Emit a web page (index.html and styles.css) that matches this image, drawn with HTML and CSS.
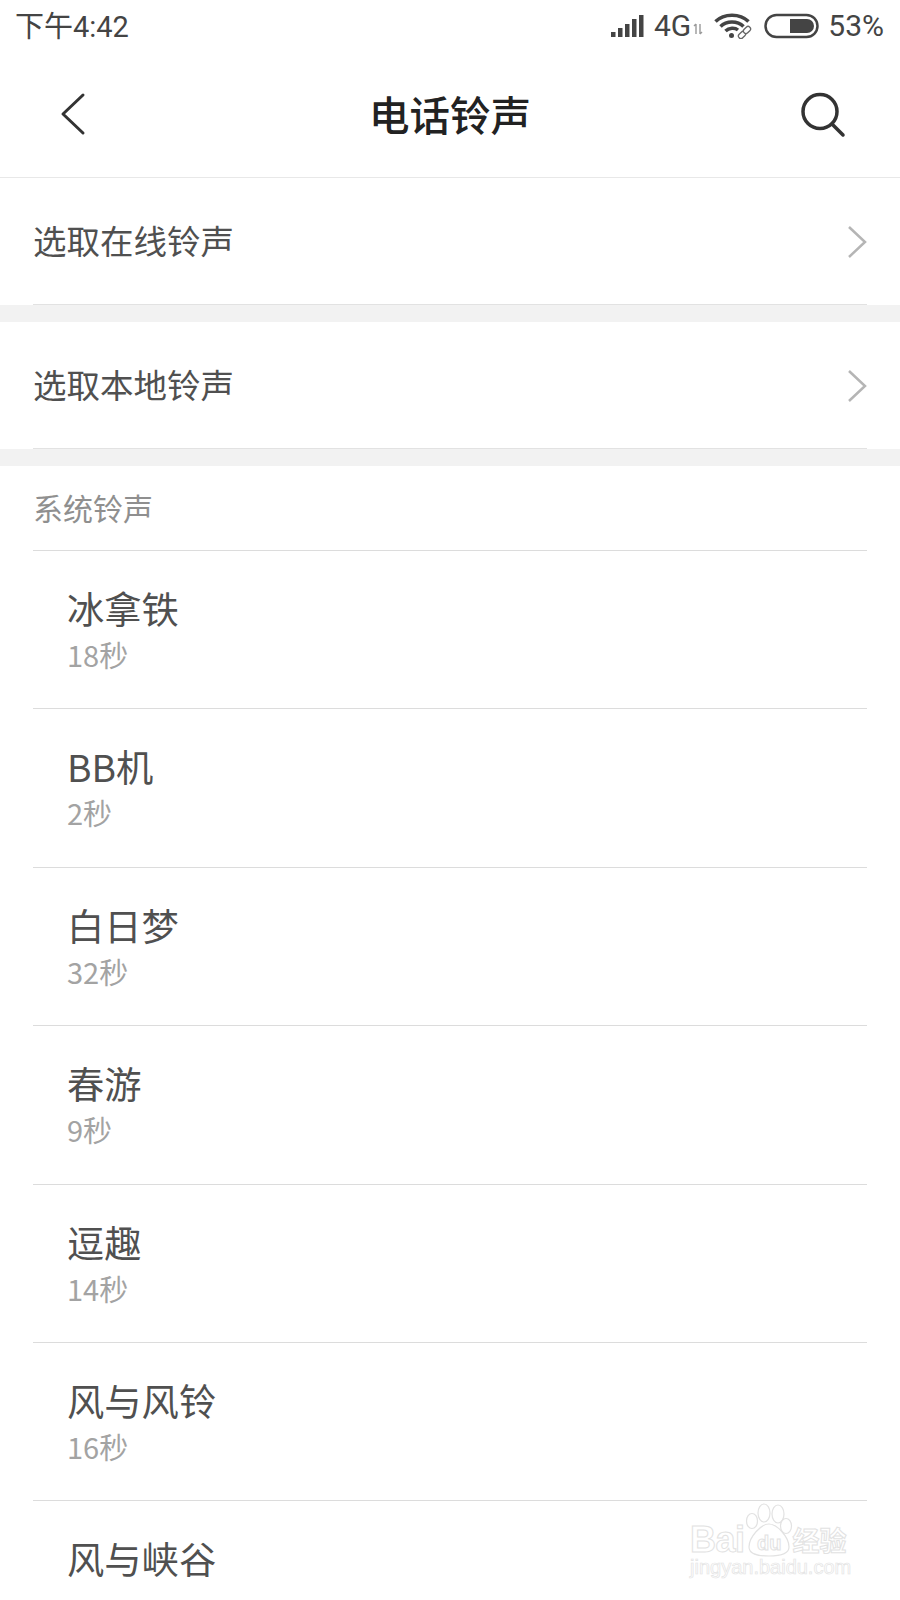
FILE: index.html
```html
<!DOCTYPE html>
<html lang="zh-CN">
<head>
  <meta charset="UTF-8" />
  <title>电话铃声</title>
  <link rel="stylesheet" href="styles.css">
</head>
<body>
  <div id="wrapper">

    <div class="status-bar">
      <span class="status-time">下午4:42</span>
      <div class="status-right">
        <svg class="icon-signal" width="34" height="24" viewBox="0 0 34 24">
          <rect x="0" y="18" width="4.500" height="5" fill="#444"/>
          <rect x="7" y="14" width="4.500" height="9" fill="#444"/>
          <rect x="14" y="10" width="4.500" height="13" fill="#444"/>
          <rect x="21" y="5" width="4.500" height="18" fill="#444"/>
          <rect x="28" y="1" width="4.500" height="22" fill="#444"/>
        </svg>
        <span class="status-net">4G</span>
        <svg class="icon-updown" width="10" height="12" viewBox="0 0 10 12">
          <path d="M3 1v10M1 3l2-2M7 1v10M7 11l2-2" stroke="#999" stroke-width="1.400" fill="none"/>
        </svg>
        <svg class="icon-wifi" width="38" height="26" viewBox="0 0 38 26">
          <path d="M1.500 8.500C10 0 26 0 34.500 8.500" stroke="#444" stroke-width="3.500" fill="none"/>
          <path d="M6.500 13.500C12.500 7.500 23.500 7.500 29.500 13.500" stroke="#444" stroke-width="3.500" fill="none"/>
          <path d="M11.500 18C15 14.500 21 14.500 24 17" stroke="#444" stroke-width="3.500" fill="none"/>
          <circle cx="17.500" cy="22.500" r="2.500" fill="#444"/>
          <g fill="#fff" stroke="#666" stroke-width="1.300">
            <rect x="24" y="19.500" width="8" height="5" rx="2.500" transform="rotate(-45 28 22)"/>
            <rect x="29" y="14.500" width="8" height="5" rx="2.500" transform="rotate(-45 33 17)"/>
          </g>
        </svg>
        <svg class="icon-battery" width="56" height="26" viewBox="0 0 56 26">
          <rect x="1.500" y="2" width="52" height="22" rx="11" stroke="#444" stroke-width="2.500" fill="none"/>
          <path d="M26 6h17a7 7 0 0 1 0 14H26z" fill="#444"/>
        </svg>
        <span class="status-pct">53%</span>
      </div>
    </div>

    <div class="nav-bar">
      <svg class="icon-back" width="30" height="44" viewBox="0 0 30 44">
        <path d="M25 3L5 22l20 19" stroke="#333" stroke-width="3" stroke-linecap="round" stroke-linejoin="round" fill="none"/>
      </svg>
      <h1 class="nav-title">电话铃声</h1>
      <svg class="icon-search" width="46" height="46" viewBox="0 0 46 46">
        <circle cx="20" cy="19.500" r="17" stroke="#333" stroke-width="3.500" fill="none"/>
        <path d="M32 32l11 11" stroke="#333" stroke-width="3.500" stroke-linecap="round" fill="none"/>
      </svg>
    </div>

    <div class="link-row">
      <span>选取在线铃声</span>
      <svg class="chevron" width="20" height="34" viewBox="0 0 20 34">
        <path d="M2 2l16 15L2 32" stroke="#b5b5b5" stroke-width="2.500" fill="none"/>
      </svg>
    </div>
    <div class="band"></div>
    <div class="link-row">
      <span>选取本地铃声</span>
      <svg class="chevron" width="20" height="34" viewBox="0 0 20 34">
        <path d="M2 2l16 15L2 32" stroke="#b5b5b5" stroke-width="2.500" fill="none"/>
      </svg>
    </div>
    <div class="band"></div>

    <div class="section-head">系统铃声</div>

    <ul class="tone-list">
      <li><div class="tone-name">冰拿铁</div><div class="tone-len">18秒</div></li>
      <li><div class="tone-name">BB机</div><div class="tone-len">2秒</div></li>
      <li><div class="tone-name">白日梦</div><div class="tone-len">32秒</div></li>
      <li><div class="tone-name">春游</div><div class="tone-len">9秒</div></li>
      <li><div class="tone-name">逗趣</div><div class="tone-len">14秒</div></li>
      <li><div class="tone-name">风与风铃</div><div class="tone-len">16秒</div></li>
      <li><div class="tone-name">风与峡谷</div></li>
    </ul>

    <div class="watermark">
      <div class="wm-logo">
        <span class="wm-bai">Bai</span>
        <svg class="wm-paw" width="50" height="55" viewBox="0 0 50 55">
          <g stroke="#e2e2e2" stroke-width="1.200" fill="#fff">
            <ellipse cx="9" cy="18" rx="5.500" ry="7.500"/>
            <ellipse cx="21" cy="10" rx="6" ry="9"/>
            <ellipse cx="35" cy="11" rx="6" ry="9"/>
            <ellipse cx="43" cy="23" rx="5.500" ry="7.500"/>
            <path d="M26 21c8 0 20 13 20 23 0 7-8 9-20 9S6 51 6 44c0-10 12-23 20-23z"/>
          </g>
        </svg>
        <span class="wm-du">du</span>
        <span class="wm-cn">经验</span>
      </div>
      <div class="wm-url">jingyan.baidu.com</div>
    </div>
  </div>
</body>
</html>
```

FILE: styles.css
```css
html, body {
  margin: 0;
  padding: 0;
  background: #fff;
  font-family: "Noto Sans CJK SC", "Noto Sans", sans-serif;
  color: #505050;
  overflow: hidden;
}

#wrapper {
  position: relative;
  height: 1600px;
  overflow: hidden;
}

.status-bar {
  height: 50px;
  display: flex;
  align-items: center;
  justify-content: space-between;
  padding: 0 16px 0 15px;
  color: #444;
  font-size: 29px;
  font-family: Roboto, "Noto Sans CJK SC", sans-serif;
}

.status-time {
  margin-bottom: 2px;
}

.status-right {
  display: flex;
  align-items: center;
  padding-top: 1px;
  font-size: 30px;
}

.status-net {
  margin-left: 9px;
}

.icon-updown {
  margin: 6px 0 0 2px;
}

.icon-wifi {
  margin-left: 11px;
}

.icon-battery {
  margin-left: 12px;
}

.status-pct {
  margin-left: 8px;
}

.nav-bar {
  height: 127px;
  display: flex;
  align-items: center;
  justify-content: space-between;
  padding: 0 54px 0 58px;
  border-bottom: 1px solid #e8e8e8;
  position: relative;
}

.icon-search {
  margin-top: 2px;
}

.nav-title {
  position: absolute;
  left: 0;
  right: 0;
  margin: 0;
  text-align: center;
  font-size: 40.500px;
  font-weight: 500;
  color: #222;
}

.link-row {
  height: 127px;
  margin: 0 33px;
  padding-bottom: 4px;
  display: flex;
  align-items: center;
  justify-content: space-between;
  font-size: 33.500px;
  box-sizing: border-box;
  border-bottom: 1px solid #e2e2e2;
}

.chevron {
  margin-top: 5px;
}

.band {
  height: 17px;
  background: #f2f2f2;
}

.section-head {
  height: 85px;
  margin: 0 33px;
  line-height: 83px;
  font-size: 30px;
  color: #8f8f8f;
  box-sizing: border-box;
  border-bottom: 1px solid #dcdcdc;
}

.tone-list {
  list-style: none;
  margin: 0 33px;
  padding: 0;
}

.tone-list li {
  height: 158.400px;
  box-sizing: border-box;
  padding: 32px 0 0 34px;
  border-bottom: 1px solid #dcdcdc;
}

.tone-list li:last-child {
  border-bottom: none;
}

.tone-name {
  font-size: 37.300px;
  line-height: 51px;
}

.tone-len {
  font-size: 29px;
  line-height: 40px;
  color: #a3a3a3;
}

.watermark {
  position: absolute;
  left: 690px;
  top: 1503px;
  width: 170px;
  pointer-events: none;
}

.wm-logo {
  display: flex;
  align-items: flex-end;
  height: 55px;
  position: relative;
}

.wm-bai, .wm-du, .wm-cn {
  color: #fff;
  -webkit-text-stroke: 1px #e2e2e2;
  font-family: "Liberation Sans", sans-serif;
  font-weight: bold;
}

.wm-bai {
  font-size: 36px;
  line-height: 36px;
  letter-spacing: -0.500px;
}

.wm-paw {
  margin-left: -2px;
}

.wm-du {
  position: absolute;
  left: 67px;
  bottom: 3px;
  font-size: 20px;
  line-height: 24px;
}

.wm-cn {
  font-family: "Noto Sans CJK SC", sans-serif;
  font-size: 27px;
  line-height: 36px;
  white-space: nowrap;
}

.wm-url {
  margin-top: -3px;
  color: #fff;
  -webkit-text-stroke: 0.700px #e4e4e4;
  font-family: "Liberation Sans", sans-serif;
  font-size: 20px;
  line-height: 24px;
  white-space: nowrap;
}
```
